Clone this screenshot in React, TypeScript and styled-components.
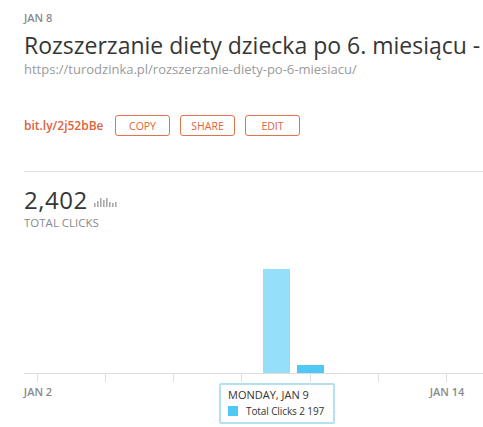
import React from "react";
import styled, { createGlobalStyle } from "styled-components";

const Global = createGlobalStyle`
  html, body { margin: 0; padding: 0; background: #fff; }
  body { font-family: "Open Sans", "Liberation Sans", sans-serif; overflow: hidden; }
`;

const Page = styled.div`
  width: 483px;
  height: 427px;
  overflow: hidden;
  padding-left: 24px;
  box-sizing: border-box;
  display: flex;
  flex-direction: column;
`;

const DateLabel = styled.div`
  margin-top: 11px;
  font-size: 11px;
  line-height: 13px;
  color: #8a8a8a;
  font-weight: 600;
`;

const Title = styled.h1`
  margin: 8px 0 0 0;
  font-size: 23px;
  line-height: 27px;
  font-weight: 400;
  color: #363636;
  white-space: nowrap;
`;

const Url = styled.div`
  margin-top: 2px;
  font-size: 13px;
  line-height: 17px;
  color: #9a9a9a;
  white-space: nowrap;
`;

const LinkRow = styled.div`
  margin-top: 37px;
  display: flex;
  align-items: center;
  gap: 10px;
  height: 21px;
`;

const Short = styled.span`
  font-size: 12px;
  font-weight: 600;
  color: #e0623b;
  width: 81px;
  white-space: nowrap;
`;

const Button = styled.button`
  width: 55px;
  height: 21px;
  box-sizing: border-box;
  border: 1px solid #e0734f;
  border-radius: 3px;
  background: #fff;
  color: #e0623b;
  font-family: inherit;
  font-size: 10.5px;
  padding: 0;
  text-transform: uppercase;
`;

const Divider = styled.hr`
  margin: 35px 0 0 0;
  border: none;
  border-top: 1px solid #dcdfe0;
  height: 0;
`;

const StatRow = styled.div`
  margin-top: 15px;
  display: flex;
  align-items: flex-end;
  gap: 6px;
  height: 26px;
`;

const Big = styled.span`
  font-size: 24px;
  line-height: 26px;
  color: #363636;
  letter-spacing: 0.5px;
`;

const Spark = styled.svg`
  margin-bottom: 6px;
`;

const StatLabel = styled.div`
  margin-top: 3px;
  font-size: 11.5px;
  line-height: 14px;
  color: #8a8a8a;
  font-weight: 400;
`;

const ChartWrap = styled.div`
  position: relative;
  margin-top: 20px;
  margin-left: -24px;
  width: 483px;
  height: 190px;
`;

const Tooltip = styled.div`
  position: absolute;
  left: 219px;
  top: 133px;
  width: 116px;
  height: 41px;
  box-sizing: border-box;
  border: 2px solid #b5e0f0;
  border-radius: 2px;
  background: #fff;
  padding: 3px 0 0 7px;
  font-size: 11px;
  line-height: 14px;
  color: #333;
  white-space: nowrap;
`;

const TipRow = styled.div`
  display: flex;
  align-items: center;
  gap: 8px;
  margin-top: 2px;
  font-size: 10px;
  letter-spacing: -0.1px;
`;

const Swatch = styled.span`
  width: 10px;
  height: 10px;
  background: #4ec8f4;
`;

const days = Array.from({ length: 13 }, (_, i) => 37 + i * 34.08);

function Sparkline() {
  const hs = [4, 6, 9, 7, 9, 5, 4, 5];
  return (
    <Spark width="24" height="10" viewBox="0 0 24 10">
      {hs.map((h, i) => (
        <rect key={i} x={i * 3} y={10 - h} width="1.6" height={h} fill="#a9a9a9" />
      ))}
    </Spark>
  );
}

function Chart() {
  return (
    <svg width="483" height="190" viewBox="0 0 483 190" style={{ display: "block" }}>
      <rect x="263" y="19" width="27" height="104" fill="#95dffa" />
      <rect x="297" y="115" width="27" height="8" fill="#4ec8f4" />
      <line x1="24" y1="123.5" x2="483" y2="123.5" stroke="#dddddd" strokeWidth="1" />
      {days.filter((_, i) => i % 2 === 0).map((x, i) => (
        <line key={i} x1={Math.round(x) + 0.5} y1="124" x2={Math.round(x) + 0.5} y2="132" stroke="#dddddd" />
      ))}
      <text x="38" y="146" textAnchor="middle" fontSize="11" fontWeight="600" fill="#8a8a8a" fontFamily="Open Sans, sans-serif">JAN 2</text>
      <text x="447" y="146" textAnchor="middle" fontSize="11" fontWeight="600" fill="#8a8a8a" fontFamily="Open Sans, sans-serif">JAN 14</text>
    </svg>
  );
}

export default function App() {
  return (
    <>
      <Global />
      <Page>
        <DateLabel>JAN 8</DateLabel>
        <Title>Rozszerzanie diety dziecka po 6. miesiącu - Tu Rodzinka</Title>
        <Url>https://turodzinka.pl/rozszerzanie-diety-po-6-miesiacu/</Url>
        <LinkRow>
          <Short>bit.ly/2j52bBe</Short>
          <Button>Copy</Button>
          <Button>Share</Button>
          <Button>Edit</Button>
        </LinkRow>
        <Divider />
        <StatRow>
          <Big>2,402</Big>
          <Sparkline />
        </StatRow>
        <StatLabel>TOTAL CLICKS</StatLabel>
        <ChartWrap>
          <Chart />
          <Tooltip>
            MONDAY, JAN 9
            <TipRow>
              <Swatch />
              Total Clicks 2 197
            </TipRow>
          </Tooltip>
        </ChartWrap>
      </Page>
    </>
  );
}
